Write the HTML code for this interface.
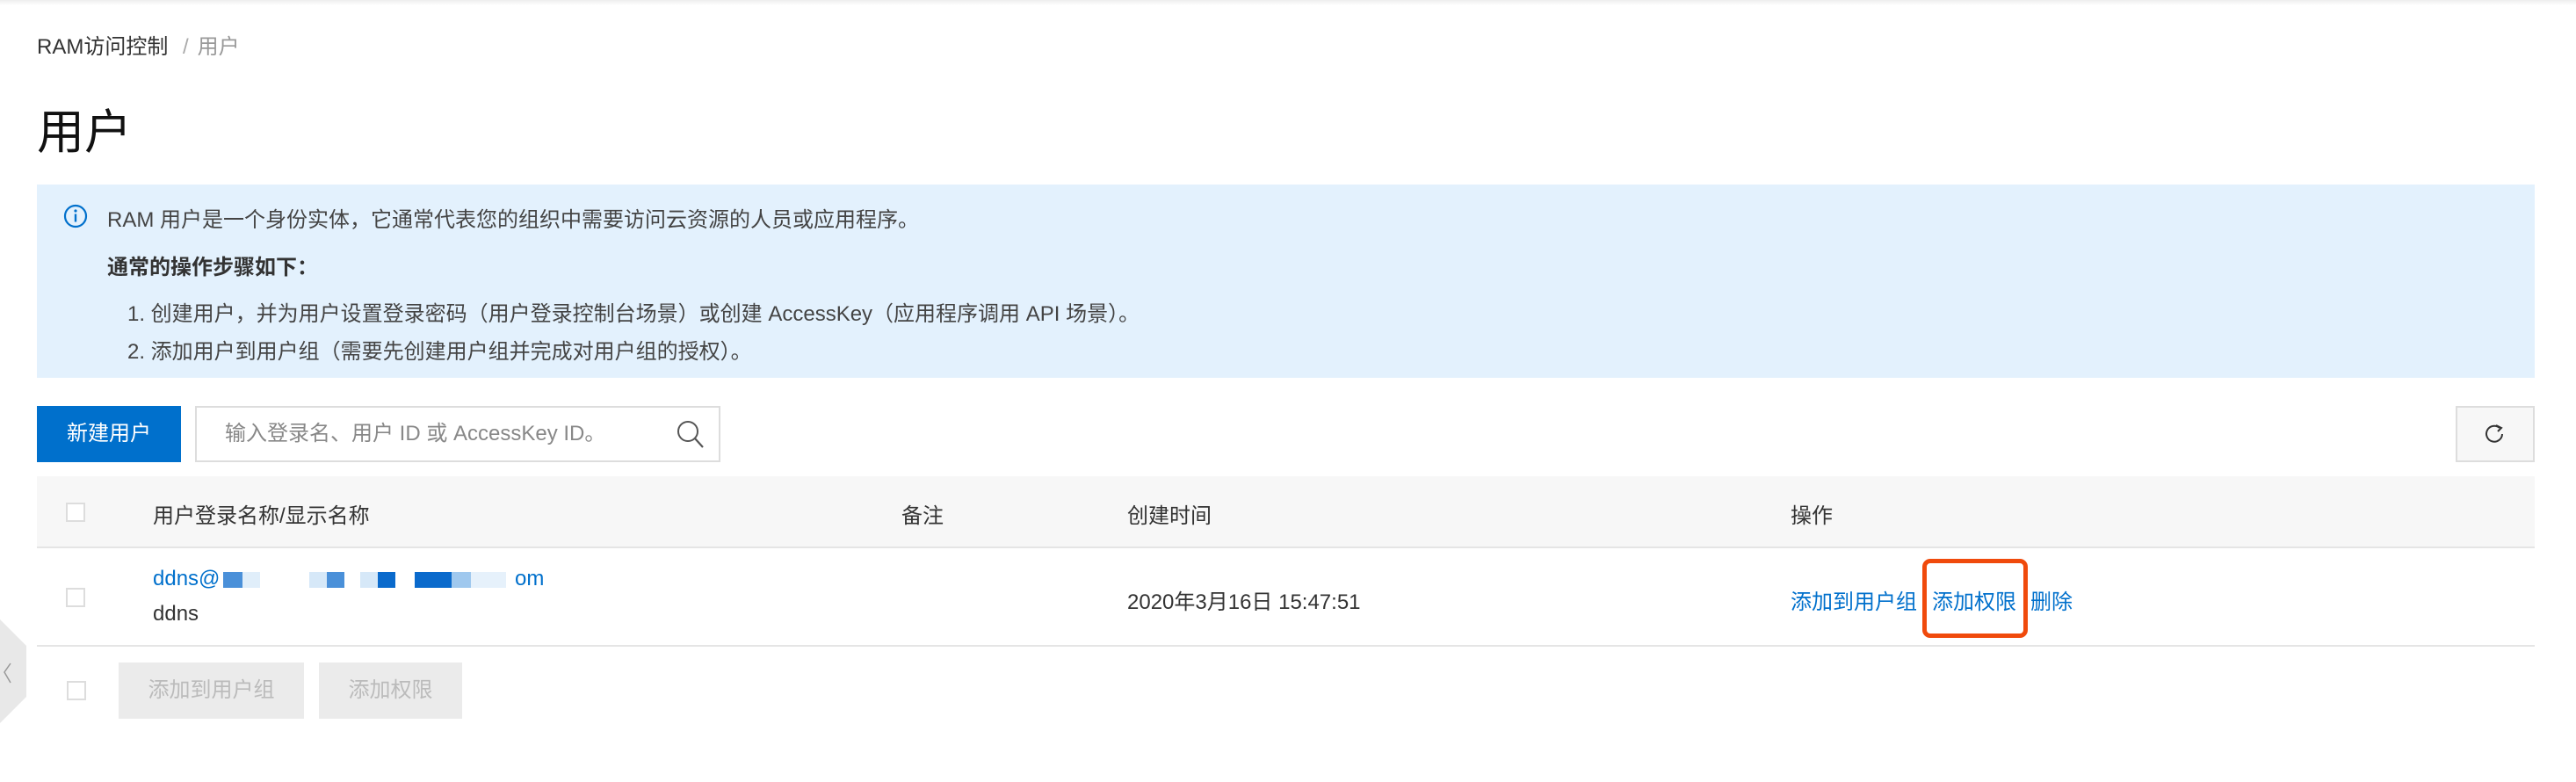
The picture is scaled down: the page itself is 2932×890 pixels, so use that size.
<!DOCTYPE html>
<html><head><meta charset="utf-8"><style>
*{margin:0;padding:0;box-sizing:border-box}
body{width:2932px;height:890px;background:#fff;font-family:"Liberation Sans","Noto Sans CJK SC",sans-serif;color:#333;position:relative;overflow:hidden;font-size:24px}
.a{position:absolute;white-space:nowrap}
.cb{position:absolute;width:22px;height:22px;border:2px solid #ddd;background:#fff}
</style></head><body>
<div class="a" style="left:0;top:0;width:2932px;height:6px;background:linear-gradient(#eee,#fff)"></div>
<div class="a" style="left:42px;top:33px;font-size:24px;color:#333">RAM访问控制 <span style="color:#aaa;margin:0 10px">/</span><span style="color:#999">用户</span></div>
<div class="a" style="left:42px;top:106px;font-size:54px;color:#111">用户</div>

<div class="a" style="left:42px;top:210px;width:2843px;height:220px;background:#e3f1fd"></div>
<svg class="a" style="left:72px;top:232px" width="28" height="28" viewBox="0 0 28 28"><circle cx="14" cy="14" r="12" fill="none" stroke="#0070cc" stroke-width="2.2"/><circle cx="14" cy="8" r="1.6" fill="#0070cc"/><rect x="12.8" y="11.5" width="2.4" height="9" fill="#0070cc"/></svg>
<div class="a" style="left:122px;top:230px;color:#444">RAM 用户是一个身份实体，它通常代表您的组织中需要访问云资源的人员或应用程序。</div>
<div class="a" style="left:122px;top:284px;color:#333;font-weight:bold">通常的操作步骤如下：</div>
<div class="a" style="left:145px;top:337px;color:#444">1. 创建用户，并为用户设置登录密码（用户登录控制台场景）或创建 AccessKey（应用程序调用 API 场景）。</div>
<div class="a" style="left:145px;top:380px;color:#444">2. 添加用户到用户组（需要先创建用户组并完成对用户组的授权）。</div>

<div class="a" style="left:42px;top:462px;width:164px;height:64px;background:#0070cc;color:#fff;text-align:center;line-height:64px">新建用户</div>
<div class="a" style="left:222px;top:462px;width:598px;height:64px;border:2px solid #ddd;color:#888;padding-left:32px;line-height:60px">输入登录名、用户 ID 或 AccessKey ID。</div>
<svg class="a" style="left:768px;top:476px" width="36" height="36" viewBox="0 0 36 36"><circle cx="15" cy="15" r="11" fill="none" stroke="#555" stroke-width="2"/><path d="M23 23 L32 33" stroke="#555" stroke-width="2.2"/></svg>
<div class="a" style="left:2795px;top:462px;width:90px;height:64px;border:2px solid #ddd;background:#f7f7f7"></div>
<svg class="a" style="left:2826px;top:480px" width="28" height="28" viewBox="0 0 28 28"><path d="M19 7 A9 9 0 1 0 22 14" fill="none" stroke="#333" stroke-width="2"/><path d="M15 4 L21 7 L17 11" fill="none" stroke="#333" stroke-width="2"/></svg>

<div class="a" style="left:42px;top:542px;width:2843px;height:82px;background:#f7f7f7;border-bottom:2px solid #e5e5e5"></div>
<div class="cb" style="left:75px;top:572px"></div>
<div class="a" style="left:174px;top:567px">用户登录名称/显示名称</div>
<div class="a" style="left:1026px;top:567px">备注</div>
<div class="a" style="left:1283px;top:567px">创建时间</div>
<div class="a" style="left:2038px;top:567px">操作</div>

<div class="a" style="left:42px;top:734px;width:2843px;height:2px;background:#e5e5e5"></div>
<div class="cb" style="left:75px;top:669px"></div>
<div class="a" style="left:174px;top:645px;color:#0070cc">ddns@</div>
<div class="a" style="left:254px;top:651px;width:22px;height:18px;background:#4a90d9"></div>
<div class="a" style="left:276px;top:651px;width:20px;height:18px;background:#e0eefa"></div>
<div class="a" style="left:352px;top:651px;width:40px;height:18px;background:#d6e8f8"></div>
<div class="a" style="left:372px;top:651px;width:20px;height:18px;background:#4a90d9"></div>
<div class="a" style="left:410px;top:651px;width:40px;height:18px;background:#d6e8f8"></div>
<div class="a" style="left:430px;top:651px;width:20px;height:18px;background:#0a6acc"></div>
<div class="a" style="left:472px;top:651px;width:42px;height:18px;background:#0a6acc"></div>
<div class="a" style="left:514px;top:651px;width:22px;height:18px;background:#9fc8ee"></div>
<div class="a" style="left:536px;top:651px;width:40px;height:18px;background:#e6f1fb"></div>
<div class="a" style="left:586px;top:645px;color:#0070cc">om</div>
<div class="a" style="left:174px;top:685px">ddns</div>
<div class="a" style="left:1283px;top:665px">2020年3月16日 15:47:51</div>
<div class="a" style="left:2038px;top:665px;color:#0070cc">添加到用户组</div>
<div class="a" style="left:2199px;top:665px;color:#0070cc">添加权限</div>
<div class="a" style="left:2311px;top:665px;color:#0070cc">删除</div>
<div class="a" style="left:2188px;top:636px;width:120px;height:90px;border:5px solid #f04a0c;border-radius:9px"></div>

<div class="cb" style="left:76px;top:775px"></div>
<div class="a" style="left:135px;top:754px;width:211px;height:64px;background:#ebebeb;color:#bbb;text-align:center;line-height:64px">添加到用户组</div>
<div class="a" style="left:363px;top:754px;width:163px;height:64px;background:#ebebeb;color:#bbb;text-align:center;line-height:64px">添加权限</div>

<svg class="a" style="left:0;top:705px" width="32" height="118" viewBox="0 0 32 118"><path d="M0 0 L30 30 L30 88 L0 118 Z" fill="#e8e8e8"/><path d="M12 50 L5 60 L12 72" fill="none" stroke="#999" stroke-width="1.5"/></svg>
</body></html>
